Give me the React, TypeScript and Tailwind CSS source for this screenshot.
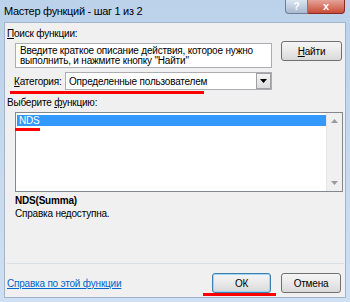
import React from 'react'

const font = { fontFamily: '"Liberation Sans", Arial, sans-serif' }

function WinButton({
  label,
  width,
  focused,
}: {
  label: React.ReactNode
  width: string
  focused?: boolean
}) {
  return (
    <div
      className={
        'h-[20px] flex items-center justify-center rounded-[3px] border text-[10px] text-black bg-gradient-to-b from-[#f5f5f5] via-[#e9e9e9] to-[#d9d9d9] ' +
        width +
        (focused ? ' border-[#3c7fb1] shadow-[inset_0_0_0_1px_#9fd5f5]' : ' border-[#707070]')
      }
    >
      {label}
    </div>
  )
}

export default function App() {
  return (
    <div
      className="w-[350px] h-[302px] flex flex-col bg-gradient-to-b from-[#bcd2ea] to-[#cfe0f2] overflow-hidden tracking-[-0.2px]"
      style={font}
    >
      {/* title bar */}
      <div className="h-[22px] flex justify-between shrink-0">
        <span className="pl-[4px] pt-[4px] text-[11px] text-black leading-[14px] tracking-[-0.3px]">
          Мастер функций - шаг 1 из 2
        </span>
        <div className="flex mr-[5px] h-[14px]">
          <div className="w-[23px] h-full rounded-bl-[4px] border border-[#6d7f96] border-t-0 bg-gradient-to-b from-[#dbe5f1] to-[#a9bad0] flex items-center justify-center text-[10px] font-bold text-white leading-none">
            ?
          </div>
          <div className="w-[37px] h-full rounded-br-[4px] border border-[#8b2a22] border-t-0 border-l-0 bg-gradient-to-b from-[#e4a398] to-[#c94a37] flex items-center justify-center text-[11px] font-bold text-white leading-none">
            x
          </div>
        </div>
      </div>

      {/* client area */}
      <div className="relative mx-[4px] mb-[4px] flex-1 bg-[#f0f0f0] border border-[#a0b4cc] flex flex-col px-[2px]">
        <div className="mt-[4px] text-[10px] leading-[13px] text-black">
          <span className="underline">П</span>оиск функции:
        </div>

        <div className="flex mt-[3px]">
          <div className="ml-[8px] w-[257px] h-[25px] bg-white border border-[#abadb3] px-[4px] pt-[2px] text-[10px] leading-[10px] text-black">
            Введите краткое описание действия, которое нужно выполнить, и нажмите кнопку "Найти"
          </div>
          <div className="ml-[9px] -mt-[2px]">
            <WinButton
              width="w-[61px]"
              label={
                <span>
                  <span className="underline">Н</span>айти
                </span>
              }
            />
          </div>
        </div>

        <div className="flex items-center mt-[4px]">
          <span className="ml-[7px] w-[51px] text-[10px] text-black">
            <span className="underline">К</span>атегория:
          </span>
          <div className="w-[207px] h-[18px] bg-white border border-[#abadb3] flex items-center justify-between">
            <span className="pl-[3px] text-[10px] text-black">Определенные пользователем</span>
            <div className="w-[15px] h-[16px] border border-[#a0a0a0] bg-gradient-to-b from-[#f4f4f4] to-[#dcdcdc] flex items-center justify-center">
              <svg width="7" height="4" viewBox="0 0 7 4">
                <path d="M0 0h7L3.5 4z" fill="#000" />
              </svg>
            </div>
          </div>
        </div>

        <div className="mt-[6px] text-[10px] leading-[13px] text-black">
          Выберите <span className="underline">ф</span>ункцию:
        </div>

        <div className="ml-[8px] mt-[3px] w-[328px] h-[80px] bg-white border border-[#828790] flex">
          <div className="flex-1 pt-[2px] pl-[1px]">
            <div className="h-[11px] bg-[#3399ff] text-white text-[10px] leading-[11px] pl-[2px]">
              NDS
            </div>
          </div>
          <div className="w-[16px] bg-[#f0f0f0] border-l border-[#e6e6e6] flex flex-col justify-between items-center py-[6px]">
            <svg width="7" height="4" viewBox="0 0 7 4">
              <path d="M3.5 0L7 4H0z" fill="#9a9a9a" />
            </svg>
            <svg width="7" height="4" viewBox="0 0 7 4">
              <path d="M0 0h7L3.5 4z" fill="#9a9a9a" />
            </svg>
          </div>
        </div>

        <div className="ml-[8px] mt-[2px] text-[10px] leading-[13px] font-bold text-black">
          NDS(Summa)
        </div>
        <div className="ml-[8px] text-[10px] leading-[13px] text-black">
          Справка недоступна.
        </div>

        <div className="mt-[43px] h-px w-[337px] bg-[#d5dfe5]" />

        <div className="flex items-center mt-[9px]">
          <span className="text-[10px] text-[#0066cc] underline">
            Справка по этой функции
          </span>
          <div className="ml-auto flex gap-[10px] mr-[2px]">
            <WinButton width="w-[59px]" label="ОК" focused />
            <WinButton width="w-[60px]" label="Отмена" />
          </div>
        </div>

        {/* red annotation marks */}
        <div className="absolute left-[5px] top-[68px] w-[194px] h-[3px] bg-[#ff0000]" />
        <div className="absolute left-[10px] top-[105px] w-[25px] h-[3px] bg-[#ff0000]" />
        <div className="absolute left-[198px] top-[270px] w-[73px] h-[3px] bg-[#ff0000]" />
      </div>
    </div>
  )
}
